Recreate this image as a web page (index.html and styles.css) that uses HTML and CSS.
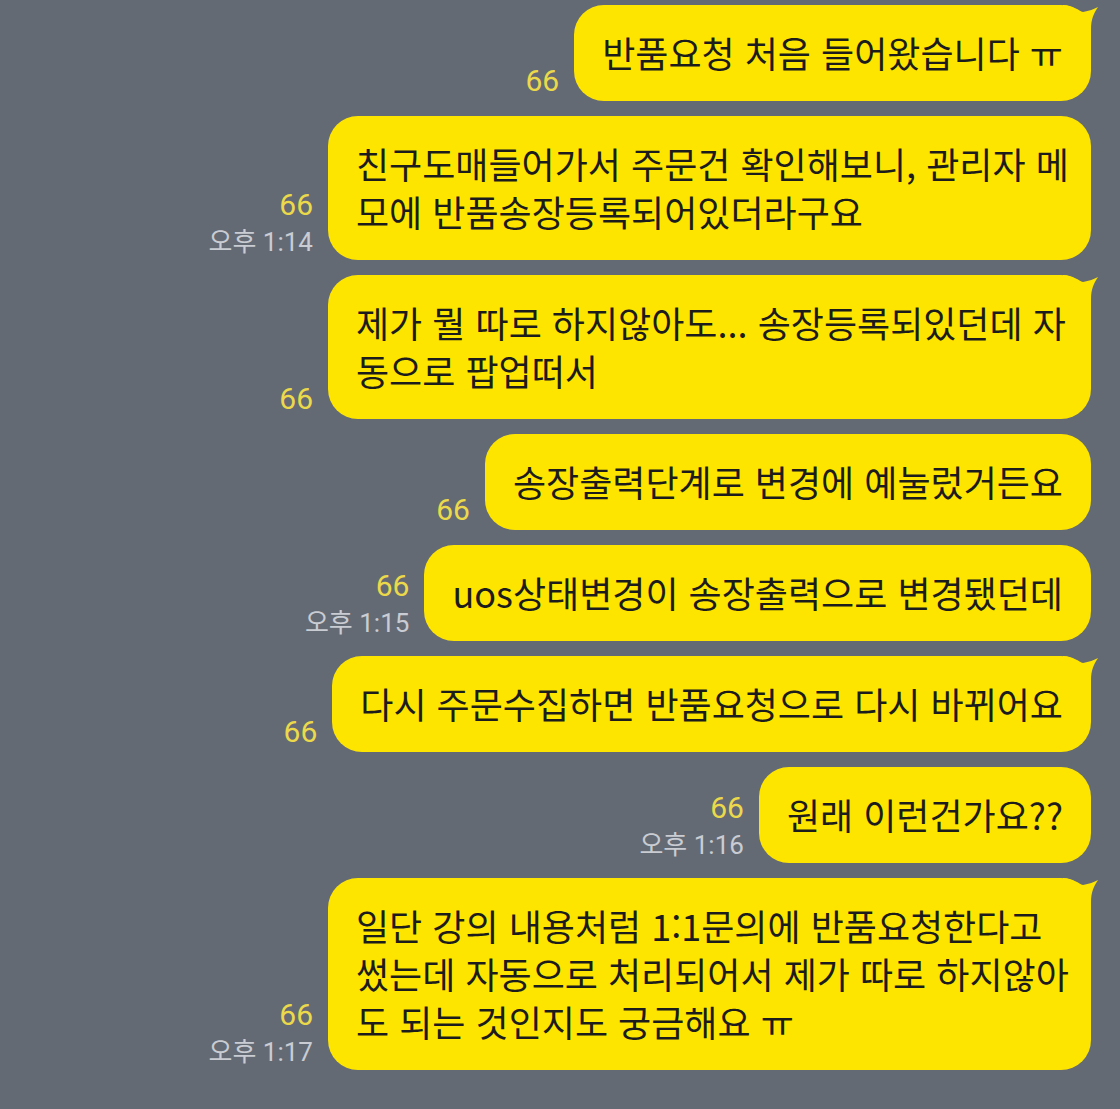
FILE: index.html
```html
<!DOCTYPE html>
<html lang="ko">
<head>
    <meta charset="UTF-8">
    <meta name="viewport" content="width=device-width, initial-scale=1.0">
    <title>채팅</title>
    <link rel="stylesheet" href="styles.css">
</head>
<body>
    <div class="chat">
        <div class="row">
            <div class="meta"><span class="count">66</span></div>
            <div class="bubble">반품요청 처음 들어왔습니다 ㅠ<svg class="horn" viewBox="0 0 32 40"><path d="M-4 0 C6 0 12 6 16 7 C22 6 27 4 31 2 C27 8 24 14 24 24 L24 40 L-4 40 Z"/></svg></div>
        </div>

        <div class="row">
            <div class="meta"><span class="count">66</span><span class="time">오후 1:14</span></div>
            <div class="bubble wide">친구도매들어가서 주문건 확인해보니, 관리자 메<br>모에 반품송장등록되어있더라구요</div>
        </div>

        <div class="row">
            <div class="meta"><span class="count">66</span></div>
            <div class="bubble wide">제가 뭘 따로 하지않아도... 송장등록되있던데 자<br>동으로 팝업떠서<svg class="horn" viewBox="0 0 32 40"><path d="M-4 0 C6 0 12 6 16 7 C22 6 27 4 31 2 C27 8 24 14 24 24 L24 40 L-4 40 Z"/></svg></div>
        </div>

        <div class="row">
            <div class="meta"><span class="count">66</span></div>
            <div class="bubble">송장출력단계로 변경에 예눌렀거든요</div>
        </div>

        <div class="row">
            <div class="meta"><span class="count">66</span><span class="time">오후 1:15</span></div>
            <div class="bubble">uos상태변경이 송장출력으로 변경됐던데</div>
        </div>

        <div class="row">
            <div class="meta"><span class="count">66</span></div>
            <div class="bubble">다시 주문수집하면 반품요청으로 다시 바뀌어요<svg class="horn" viewBox="0 0 32 40"><path d="M-4 0 C6 0 12 6 16 7 C22 6 27 4 31 2 C27 8 24 14 24 24 L24 40 L-4 40 Z"/></svg></div>
        </div>

        <div class="row">
            <div class="meta"><span class="count">66</span><span class="time">오후 1:16</span></div>
            <div class="bubble">원래 이런건가요??</div>
        </div>

        <div class="row">
            <div class="meta"><span class="count">66</span><span class="time">오후 1:17</span></div>
            <div class="bubble wide">일단 강의 내용처럼 1:1문의에 반품요청한다고<br>썼는데 자동으로 처리되어서 제가 따로 하지않아<br>도 되는 것인지도 궁금해요 ㅠ<svg class="horn" viewBox="0 0 32 40"><path d="M-4 0 C6 0 12 6 16 7 C22 6 27 4 31 2 C27 8 24 14 24 24 L24 40 L-4 40 Z"/></svg></div>
        </div>
    </div>
</body>
</html>
```

FILE: styles.css
```css
body {
    margin: 0;
    background: #646a74;
    font-family: "Noto Sans CJK KR", "Noto Sans", sans-serif;
}
.chat {
    display: flex;
    flex-direction: column;
    gap: 15px;
    padding: 5px 29px 0 0;
}
.row {
    display: flex;
    justify-content: flex-end;
    align-items: flex-end;
    gap: 15px;
}
.meta {
    display: flex;
    flex-direction: column;
    align-items: flex-end;
    padding-bottom: 5px;
    font-family: Roboto, "Noto Sans CJK KR", sans-serif;
}
.count {
    font-size: 30px;
    line-height: 30px;
    color: #ecd94a;
}
.time {
    margin-top: 9px;
    font-size: 26px;
    line-height: 26px;
    color: #c9ccd2;
}
.bubble {
    position: relative;
    background: #fee500;
    color: #1c1c1c;
    border-radius: 30px;
    padding: 23px 28px 25px;
    font-size: 36px;
    line-height: 48px;
    white-space: nowrap;
}
.bubble.wide {
    width: 763px;
    box-sizing: border-box;
}
.horn {
    position: absolute;
    top: 0;
    right: -8px;
    width: 32px;
    height: 40px;
    overflow: visible;
}
.horn path {
    fill: #fee500;
}
```
